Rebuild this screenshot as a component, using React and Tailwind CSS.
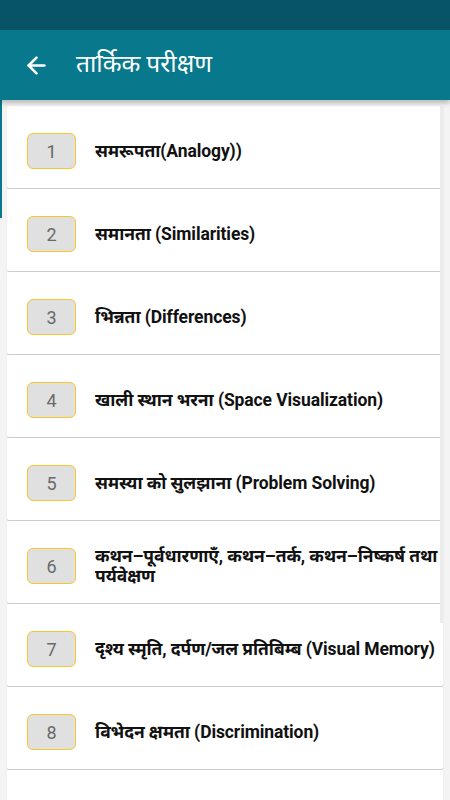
import { ArrowLeft } from "lucide-react";

const topics = [
  "समरूपता(Analogy))",
  "समानता (Similarities)",
  "भिन्नता (Differences)",
  "खाली स्थान भरना (Space Visualization)",
  "समस्या को सुलझाना (Problem Solving)",
  "कथन–पूर्वधारणाएँ, कथन–तर्क, कथन–निष्कर्ष तथा पर्यवेक्षण",
  "दृश्य स्मृति, दर्पण/जल प्रतिबिम्ब (Visual Memory)",
  "विभेदन क्षमता (Discrimination)",
  "",
];

const App = () => {
  return (
    <div
      className="h-[800px] overflow-hidden flex flex-col bg-[#f4f4f4]"
      style={{ fontFamily: "Roboto, 'Noto Sans', 'DejaVu Sans', sans-serif" }}
    >
      {/* Status bar */}
      <div className="h-[30px] shrink-0 bg-[#075466]" />

      {/* Toolbar */}
      <div className="h-[70px] shrink-0 bg-[#08788c] flex items-center pl-[23px] text-white shadow-[0_3px_5px_rgba(0,0,0,0.25)] relative z-10">
        <ArrowLeft size={27} strokeWidth={2.3} />
        <h1 className="ml-[26px] text-[24.5px] leading-none pb-[2px]">तार्किक परीक्षण</h1>
      </div>

      {/* List */}
      <div className="relative flex-1 pt-[6px] px-[7px]">
        <div className="absolute left-0 top-0 w-[2px] h-[118px] bg-[#08788c]" />
        <div className="absolute right-[6px] top-[6px] w-[4px] h-[517px] bg-[#ececec]" />
        {topics.map((t, i) => (
          <div
            key={i}
            className="h-[82px] mb-[1px] bg-white rounded-[2px] shadow-[0_1px_1px_rgba(0,0,0,0.18)] flex items-center pt-[8px] pr-[2px]"
          >
            {t && (
              <>
                <div className="ml-[20px] w-[49px] h-[36px] shrink-0 rounded-[6px] border border-[#f8c630] bg-[#e0e0e0] flex items-center justify-center text-[18px] text-[#6a6a6a]">
                  {i + 1}
                </div>
                <div className="ml-[19px] text-[17.5px] font-bold text-[#111] leading-[20px] tracking-[-0.1px]">{t}</div>
              </>
            )}
          </div>
        ))}
      </div>
    </div>
  );
};

export default App;
